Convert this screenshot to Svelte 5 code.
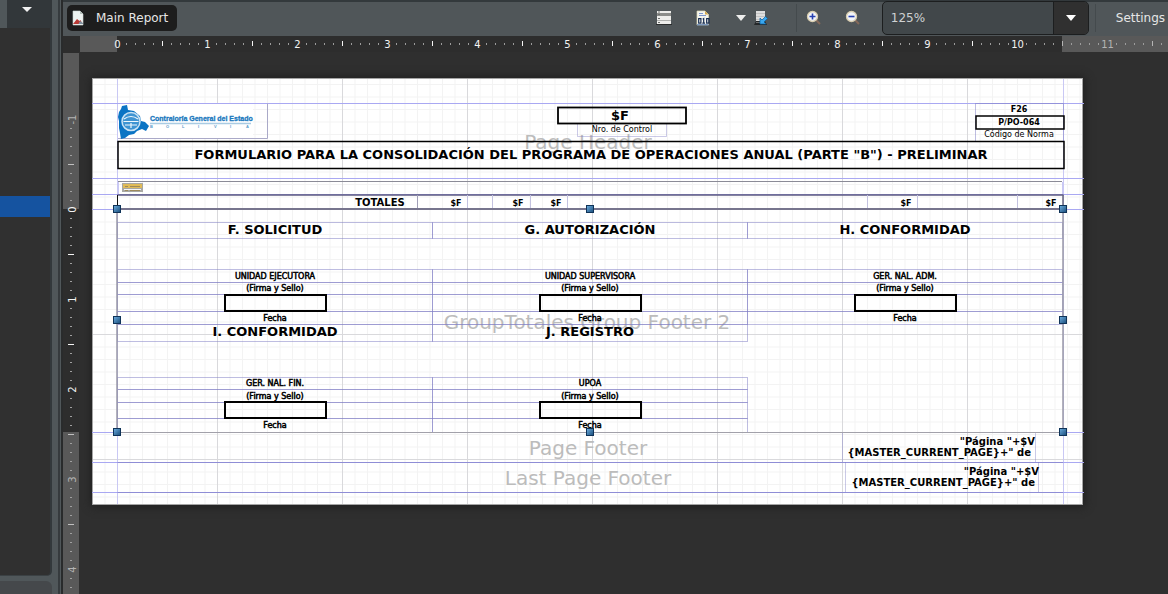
<script>
  const hTicks = Array.from({ length: 117 }, (_, i) => i);
  const vTicks = Array.from({ length: 53 }, (_, i) => i - 10);

  const minorX = Array.from({ length: 79 }, (_, i) => 92.5 + (i + 1) * 12.5);
  const majorX = Array.from({ length: 7 }, (_, i) => 92.5 + (i + 1) * 125);
  const minorY = Array.from({ length: 34 }, (_, i) => 84.5 + i * 12.5);
  const majorY = [334.5, 459.5];
  const bandLines = [103.5, 178.5, 194.5, 209.5, 432.5, 462.5, 492.5];

  const watermarks = [
    ['Page Header', 588, 149],
    ['GroupTotales Group Footer 2', 587, 329],
    ['Page Footer', 588, 455],
    ['Last Page Footer', 588, 485]
  ];

  const cells = [
    [975.5, 103.5, 88, 38],
    [117.5, 222.5, 315, 16],
    [432.5, 222.5, 315, 16],
    [747.5, 222.5, 315, 16],
    [117.5, 324.5, 315, 17],
    [432.5, 324.5, 315, 17]
  ];
  for (const x of [117.5, 432.5, 747.5]) {
    cells.push([x, 269.5, 315, 13], [x, 282.5, 315, 12], [x, 294.5, 315, 17], [x, 311.5, 315, 13]);
  }
  for (const x of [117.5, 432.5]) {
    cells.push([x, 377.5, 315, 12], [x, 389.5, 315, 13], [x, 402.5, 315, 16], [x, 418.5, 315, 14]);
  }

  const totalLines = [417.5, 467.5, 492.5, 530.5, 567.5, 867.5, 917.5, 1017.5];
  const totalFields = [456, 518, 556, 906, 1051];

  const signatures = [
    ['UNIDAD EJECUTORA', 275, 279, 291, 295, 321],
    ['UNIDAD SUPERVISORA', 590, 279, 291, 295, 321],
    ['GER. NAL. ADM.', 905, 279, 291, 295, 321],
    ['GER. NAL. FIN.', 275, 386, 399, 402, 428],
    ['UPOA', 590, 386, 399, 402, 428]
  ];

  const headings = [
    ['F. SOLICITUD', 275, 234],
    ['G. AUTORIZACIÓN', 590, 234],
    ['H. CONFORMIDAD', 905, 234],
    ['I. CONFORMIDAD', 275, 336],
    ['J. REGISTRO', 590, 336]
  ];

  const handles = [
    [117, 209], [590, 209], [1063, 209],
    [117, 320], [1063, 320],
    [117, 432], [590, 432], [1063, 432]
  ];
</script>

<div class="app">
  <aside class="side">
    <div class="panel">
      <div class="panel-head">
        <button class="plain" aria-label="Panel menu">
          <svg width="12" height="8" viewBox="0 0 12 8"><path d="M1 1h10L6 6z" fill="#f2f2f2" /></svg>
        </button>
      </div>
      <div class="panel-list"><div class="selected"></div></div>
      <div class="panel-foot"></div>
    </div>
  </aside>

  <main class="editor">
    <div class="toolbar">
      <button class="tab">
        <svg width="14" height="16" viewBox="0 0 14 16">
          <path d="M3 1h7l3 3v11H3z" fill="#eef3f1" stroke="#cfd6d3" stroke-width=".6" />
          <path d="M10 1v3h3" fill="#b5c1bd" />
          <path d="M3 14l4-5 2.500 2 1-1 2 4z" fill="#b83a36" />
          <path d="M8.500 14l1.500-3 3 2v1z" fill="#8292a0" />
        </svg>
        Main Report
      </button>
      <div class="tools">
        <button class="plain" aria-label="Bands">
          <svg width="16" height="16" viewBox="0 0 16 16">
            <rect x="1" y="1" width="14" height="14" fill="#ededeb" />
            <rect x="1" y="3" width="14" height="3" fill="#8b8c8a" />
            <path d="M1 10.500h14" stroke="#b0b1af" />
            <path d="M2 2h2M2 4.500h2M2 8.500h2M2 12.500h2" stroke="#6e706e" />
            <path d="M0 14.500h16" stroke="#2b2d2e" />
          </svg>
        </button>
        <button class="plain binary" aria-label="Compile report">
          <svg width="15" height="16" viewBox="0 0 15 16">
            <path d="M1 1h8l3.500 3.500V15H1z" fill="#f4f5ef" stroke="#ddd9b6" stroke-width=".7" />
            <path d="M9 1l3.500 3.500H9z" fill="#d3a94b" /><path d="M3 3.500h4M3 5.500h7" stroke="#7d97cf" />
            <path d="M1 14.800h11.500" stroke="#5278b3" />
            <rect x="2.700" y="8.600" width="2.200" height="4.500" fill="none" stroke="#142a50" stroke-width="1.200" />
            <path d="M6.700 9.200l1-.6v5M6.300 13.200h2.800" fill="none" stroke="#142a50" stroke-width="1.200" />
            <rect x="10.700" y="8.600" width="2.200" height="4.500" fill="none" stroke="#142a50" stroke-width="1.200" />
          </svg>
        </button>
        <button class="plain drop" aria-label="More actions">
          <svg width="10" height="6" viewBox="0 0 10 6"><path d="M0 0h10L5 6z" fill="#eee" /></svg>
        </button>
        <button class="plain data" aria-label="Dataset and query">
          <svg width="15" height="16" viewBox="0 0 15 16">
            <path d="M2 1h9v10H2z" fill="#dedede" /><path d="M2 3.500h9M2 6.500h9M2 9.500h9" stroke="#c2c2c2" />
            <path d="M2 11h9l2 4H0z" fill="#25282a" /><path d="M2 12.500h8" stroke="#6d7072" />
            <path d="M6 14V8l2 2 3.500-3.500 2 2L10 12l2 2z" fill="#39a7ef" stroke="#0b5f9d" stroke-width=".7" />
          </svg>
        </button>
        <span class="rule"></span>
        <button class="plain zin" aria-label="Zoom in">
          <svg width="16" height="16" viewBox="0 0 16 16">
            <path d="M10 10l4 4" stroke="#84695a" stroke-width="2" />
            <circle cx="6.500" cy="6.500" r="5" fill="#f3f5fa" stroke="#d9ceb0" stroke-width="1.300" />
            <path d="M3.500 6.500h6M6.500 3.500v6" stroke="#2740b0" stroke-width="1.600" />
          </svg>
        </button>
        <button class="plain zout" aria-label="Zoom out">
          <svg width="16" height="16" viewBox="0 0 16 16">
            <path d="M10 10l4 4" stroke="#84695a" stroke-width="2" />
            <circle cx="6.500" cy="6.500" r="5" fill="#f3f5fa" stroke="#d9ceb0" stroke-width="1.300" />
            <path d="M3.500 6.500h6" stroke="#2740b0" stroke-width="1.600" />
          </svg>
        </button>
        <div class="combo">
          <input aria-label="Zoom level" value="125%" />
          <button aria-label="Choose zoom level">
            <svg width="10" height="6" viewBox="0 0 10 6"><path d="M0 0h10L5 6z" fill="#fff" /></svg>
          </button>
        </div>
        <span class="rule second"></span>
        <button class="plain settings">Settings</button>
      </div>
    </div>

    <div class="hrow">
      <div class="corner"></div>
      <svg class="hruler" height="16">
        <rect width="100%" height="16" fill="#595959" />
        <rect x="37" width="945" height="16" fill="#2d2d2d" />
        {#each hTicks as i}
          {#if i % 10 === 0}
            <text x={37.5 + i * 9} y="12" text-anchor="middle" fill={i > 105 ? '#b4b4b4' : '#f4f4f4'}>{i / 10}</text>
          {:else if i % 5 === 0}
            <rect x={37 + i * 9} y="5" width="1" height="5" fill={i > 104 ? '#b4b4b4' : '#f4f4f4'} />
          {:else}
            <rect x={37 + i * 9} y="7" width="1" height="2" fill="#9c9c9c" />
          {/if}
        {/each}
      </svg>
    </div>

    <div class="workspace">
      <svg class="vruler" width="16">
        <rect width="16" height="100%" fill="#595959" />
        <rect width="16" height="1" fill="#2d2d2d" />
        <rect y="157" width="16" height="223" fill="#2d2d2d" />
        {#each vTicks as i}
          {#if i % 10 === 0}
            <text transform="translate(13 {157.5 + i * 9}) rotate(-90)" text-anchor="middle" fill={i < 0 || i > 24 ? '#b4b4b4' : '#f4f4f4'}>{i / 10}</text>
          {:else if i % 5 === 0}
            <rect x="5" y={157 + i * 9} width="6" height="1" fill={i < 0 || i > 24 ? '#c0c0c0' : '#f4f4f4'} />
          {:else}
            <rect x="7" y={157 + i * 9} width="2" height="1" fill="#a0a0a0" />
          {/if}
        {/each}
      </svg>

      <div class="canvas">
        <svg class="page" width="990" height="426" viewBox="92 78 990 426" role="img" aria-label="Report design">
          <defs>
            <linearGradient id="grip" x1="0" y1="0" x2="1" y2="1">
              <stop offset="0" stop-color="#6fb0e2" /><stop offset="1" stop-color="#174a78" />
            </linearGradient>
          </defs>
          <rect x="92.500" y="78.500" width="990" height="426" fill="#fff" stroke="#a5a5a5" />
          {#each minorX as x}<path d="M{x} 79V504" stroke="#f3f3f3" />{/each}
          {#each minorY as y}<path d="M93 {y}H1082" stroke="#f3f3f3" />{/each}
          {#each majorX as x}<path d="M{x} 79V504" stroke="#d9d9dc" />{/each}
          {#each majorY as y}<path d="M93 {y}H1082" stroke="#d9d9dc" />{/each}

          <path d="M117.500 79V504M1063.500 79V504" stroke="#c9c8f4" />
          {#each bandLines as y}<path d="M92 {y}H1084" stroke="#a9a8f2" />{/each}
          <path d="M117.500 462.500H1063M117.500 492.500H1063" stroke="#8f8dd6" />

          {#each watermarks as [text, x, y]}
            <text class="mark" {x} {y}>{text}</text>
          {/each}

          <g fill="none" stroke="#7d7bc4" stroke-opacity=".5">
            {#each cells as [x, y, w, h]}<rect {x} {y} width={w} height={h} />{/each}
            <path d="M577.500 124v12.500H666.500V124" stroke-opacity=".4" />
            <path d="M842.500 432V462M1035.500 432V462M845.500 462V492M1038.500 462V492" stroke-opacity=".4" />
          </g>

          <rect x="118" y="104" width="135" height="34" fill="#fff" />
          <path d="M118 138.500H267.500V103.500" fill="none" stroke="#aaa9c8" />
          <g>
            <path d="M119 112l2-3 1-3 5-1 1 5 6 1 6 5 1 5 4 1 4 4-3 5-4-2-5 2-3 3-5 1-4 3-4 1-1-6-1-5 0-7-1-4z" fill="#0b74c4" />
            <circle cx="131" cy="121.500" r="9" fill="#3f94d2" stroke="#cbe3f4" stroke-width="1.500" />
            <path d="M124 119q7-5 14 0M123.500 121.500h15M125 125h12M131 123v5" fill="none" stroke="#eff8fd" stroke-width="1.200" />
            <text class="brand" x="150" y="121">Contraloría General del Estado</text>
            <path d="M150 123.500H251" stroke="#a9cbe3" stroke-width="1.500" />
            {#each ['B', 'O', 'L', 'I', 'V', 'I', 'A'] as letter, i}
              <text class="country" x={150 + i * 16} y="127.500">{letter}</text>
            {/each}
          </g>

          <g fill="none" stroke="#000" stroke-width="2">
            <rect x="558" y="107.500" width="128" height="16" stroke-width="1.800" />
            <rect x="976" y="116" width="88" height="13" stroke-width="1.500" />
            <rect x="118" y="141.500" width="946" height="27" stroke-width="1.500" />
            {#each signatures as s}<rect x={s[1] - 50} y={s[4]} width="101" height="16" />{/each}
          </g>
          <text class="title" x="591" y="159">FORMULARIO PARA LA CONSOLIDACIÓN DEL PROGRAMA DE OPERACIONES ANUAL (PARTE "B") - PRELIMINAR</text>
          <text class="title" x="620" y="120">$F</text>
          <text class="small" x="622" y="132">Nro. de Control</text>
          <text class="tag" x="1019" y="112">F26</text>
          <text class="tag" x="1019" y="125">P/PO-064</text>
          <text class="small" x="1019" y="137">Código de Norma</text>

          <path d="M118 181.500H1062" stroke="#8b8b97" />
          <path d="M118.500 182V194M1062.500 182V194" stroke="#c9c8f4" />
          <rect x="122" y="183" width="21" height="9" fill="#a8a8a4" />
          <rect x="123" y="184" width="19" height="4" fill="#e0bb58" />
          <path d="M125 186.500h3M130 186.500h10M125 190.500h3M130 190.500h10" stroke="#9d8a5c" />
          <path d="M124 189.500h17" stroke="#f5f5f5" />

          <path d="M117.500 195H1063.500" stroke="#5c5a80" stroke-width="1.500" />
          <path d="M117.500 195V209" stroke="#111" />
          <path d="M1063 195V209" stroke="#66647e" stroke-width="1.500" />
          {#each totalLines as x}<path d="M{x} 195V208" stroke="#c3c2e0" />{/each}
          <path d="M417.500 195V208" stroke="#a19fb8" />
          <text class="total" x="380" y="206">TOTALES</text>
          {#each totalFields as x}<text class="tag" {x} y="206">$F</text>{/each}

          {#each headings as [text, x, y]}<text class="title" {x} {y}>{text}</text>{/each}
          {#each signatures as [name, x, y1, y2, , y3]}
            <text class="sign" {x} y={y1}>{name}</text>
            <text class="sign" {x} y={y2}>(Firma y Sello)</text>
            <text class="sign" {x} y={y3}>Fecha</text>
          {/each}

          <text class="field" x="1035" y="445">"Página "+$V</text>
          <text class="field" x="1031" y="456">{'{MASTER_CURRENT_PAGE}+" de'}</text>
          <text class="field" x="1039" y="475">"Página "+$V</text>
          <text class="field" x="1035" y="486">{'{MASTER_CURRENT_PAGE}+" de'}</text>

          <path d="M117 209H1063" stroke="#77758e" stroke-width="2" />
          <path d="M117 209V432M1063 209V432" stroke="#9a99a8" stroke-width="1.500" />
          <path d="M117 432.500H1063" stroke="#a2a1aa" />
          {#each handles as [x, y]}
            <rect x={x - 3.5} y={y - 3.5} width="7" height="7" fill="url(#grip)" stroke="#0f3358" />
          {/each}
        </svg>
      </div>
    </div>
  </main>
</div>

<style>
  :global(body) { margin: 0; background: #2f2f2f; }
  .app {
    display: flex;
    height: 100vh;
    overflow: hidden;
    font: 12px "DejaVu Sans", sans-serif;
    color: #e6e6e6;
  }
  button, input { font: inherit; color: inherit; border: 0; margin: 0; padding: 0; background: none; }
  svg { display: block; flex: none; }
  .side {
    flex: none;
    width: 63px;
    box-sizing: border-box;
    background: linear-gradient(90deg, #50575a 58px, #363b3e 58px, #363b3e 60px, #50575a 60px, #50575a 61px, #292b2c 61px);
  }
  .panel { display: flex; flex-direction: column; width: 52px; height: 100%; }
  .panel-head { height: 28px; margin-left: 7px; background: #32373a; }
  .panel-head button { margin: 6px 0 0 14px; }
  .panel-list {
    flex: 1;
    box-sizing: border-box;
    padding-top: 168px;
    background: #303030;
    border-right: 2px solid #33393c;
    border-bottom: 1px solid #3b4144;
    border-bottom-right-radius: 5px;
  }
  .selected { height: 21px; background: #1553a0; }
  .panel-foot { height: 13px; margin-top: 5px; background: #45484b; border-top-right-radius: 6px; }

  .editor { flex: 1; min-width: 0; display: flex; flex-direction: column; }
  .toolbar {
    display: flex;
    align-items: center;
    height: 36px;
    box-sizing: border-box;
    padding-bottom: 2px;
    border-top: 2px solid #33393c;
    background: #505659;
  }
  .tab {
    display: flex;
    align-items: center;
    gap: 12px;
    height: 26px;
    margin-left: 4px;
    padding: 0 9px 0 3px;
    border-radius: 5px;
    background: #1d1d1d;
    white-space: nowrap;
  }
  .tools { display: flex; align-items: center; margin-left: auto; padding-right: 3px; }
  .plain { display: flex; align-items: center; }
  .binary { margin-left: 24px; }
  .drop { margin-left: 25px; }
  .data { margin-left: 8px; }
  .rule { width: 1px; height: 28px; margin-left: 27px; background: #444a4d; }
  .zin { margin-left: 9px; }
  .zout { margin-left: 23px; }
  .combo {
    display: flex;
    width: 207px;
    height: 34px;
    box-sizing: border-box;
    margin-left: 21px;
    border: 1px solid #1c1e1f;
    border-radius: 5px;
    background: #41474a;
    overflow: hidden;
  }
  .combo input { flex: 1; min-width: 0; padding-left: 8px; color: #cfd2d3; }
  .combo button {
    display: grid;
    place-items: center;
    width: 35px;
    border-left: 1px solid #1c1e1f;
    background: #303030;
  }
  .rule.second { margin-left: 6px; }
  .settings { margin-left: 20px; }

  .hrow { display: flex; height: 16px; }
  .corner { flex: none; width: 17px; background: #2d2d2d; }
  .hruler { flex: 1; min-width: 0; overflow: hidden; }
  .hruler text, .vruler text { font-size: 10px; }
  .workspace { flex: 1; min-height: 0; display: flex; background: #2f2f2f; }
  .vruler { height: 100%; overflow: hidden; }
  .canvas { flex: 1; min-width: 0; padding: 26px 0 0 13px; }
  .page { overflow: visible; box-shadow: 1px 1px 8px 2px #202020; }
  .page text { text-anchor: middle; fill: #000; }
  .page .mark { font-size: 20px; fill: #bcbcbc; }
  .page .title { font-size: 13px; font-weight: 700; }
  .page .small { font-size: 8px; }
  .page .tag { font-size: 8px; font-weight: 700; }
  .page .sign { font-size: 8px; stroke: #000; stroke-width: 0.5px; }
  .page .total { font-size: 10px; font-weight: 700; }
  .page .field { font-size: 10px; font-weight: 700; text-anchor: end; }
  .page .brand { font: 700 7px "Liberation Sans", sans-serif; fill: #1a78bd; stroke: #1a78bd; stroke-width: 0.3px; text-anchor: start; }
  .page .country { font: 700 4px "Liberation Sans", sans-serif; fill: #5a9ccb; text-anchor: start; }
</style>
